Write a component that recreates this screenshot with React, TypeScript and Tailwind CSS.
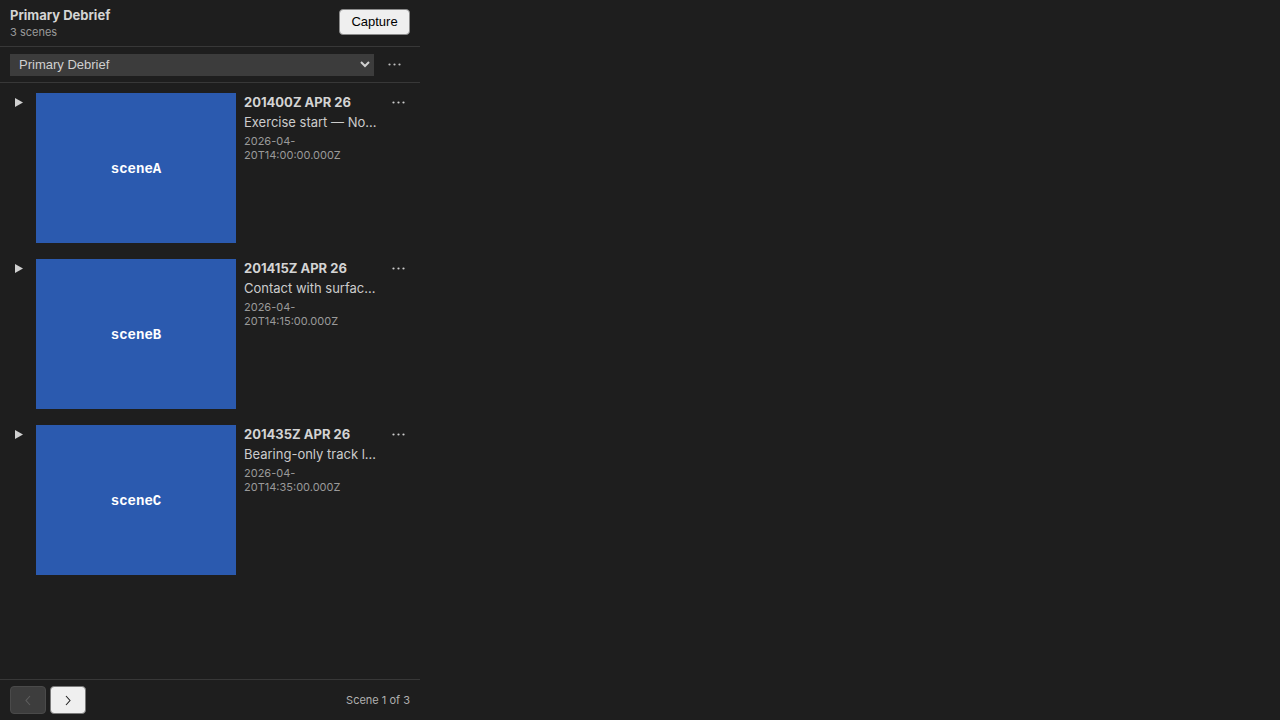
import React from "react";

type Scene = {
  id: string;
  title: string;
  description: string;
  timestamp: string;
};

const scenes: Scene[] = [
  {
    id: "sceneA",
    title: "201400Z APR 26",
    description: "Exercise start — Northern sector brief",
    timestamp: "2026-04-20T14:00:00.000Z",
  },
  {
    id: "sceneB",
    title: "201415Z APR 26",
    description: "Contact with surface group bearing 040",
    timestamp: "2026-04-20T14:15:00.000Z",
  },
  {
    id: "sceneC",
    title: "201435Z APR 26",
    description: "Bearing-only track lost after sprint",
    timestamp: "2026-04-20T14:35:00.000Z",
  },
];

const Dots: React.FC<{ className?: string }> = ({ className }) => (
  <svg width="13" height="3" viewBox="0 0 13 3" className={className} fill="currentColor">
    <circle cx="1.5" cy="1.5" r="1.1" />
    <circle cx="6.5" cy="1.5" r="1.1" />
    <circle cx="11.5" cy="1.5" r="1.1" />
  </svg>
);

const SceneRow: React.FC<{ scene: Scene }> = ({ scene }) => {
  // split timestamp so it wraps after the date dash like the reference
  const datePart = scene.timestamp.slice(0, 8);
  const rest = scene.timestamp.slice(8);
  return (
    <div className="flex items-start pl-[15px] pr-[15px] mb-[16px]">
      <button className="w-[21px] pt-[5px] flex text-[#d0d0d0]">
        <svg width="8" height="9" viewBox="0 0 8 9" fill="currentColor">
          <path d="M0 0 L8 4.5 L0 9 Z" />
        </svg>
      </button>
      <div className="w-[200px] h-[150px] bg-[#2b5aaf] flex items-center justify-center shrink-0">
        <span className="text-white font-bold text-[14px] font-[family-name:'Liberation_Mono',monospace] mt-[2px]">
          {scene.id}
        </span>
      </div>
      <div className="ml-[8px] w-[137px] min-w-0 flex flex-col">
        <div className="text-[13px] font-bold text-[#d4d4d4] leading-[18px]">
          {scene.title}
        </div>
        <div className="text-[13px] text-[#cccccc] leading-[18px] mt-[2px] truncate">
          {scene.description}
        </div>
        <div className="text-[11px] text-[#9a9a9a] leading-[14px] mt-[3px]">
          <div>{datePart}</div>
          <div>{rest}</div>
        </div>
      </div>
      <button className="ml-auto mt-[8px] text-[#cccccc]">
        <Dots />
      </button>
    </div>
  );
};

export default function App() {
  return (
    <div className="w-full h-screen bg-[#1e1e1e] font-[family-name:'Inter',sans-serif]">
      <div className="w-[420px] h-full flex flex-col">
        <div className="h-[47px] px-[10px] flex items-center justify-between border-b border-[#383838] shrink-0">
          <div className="flex flex-col">
            <span className="text-[13px] font-bold text-[#d4d4d4] leading-[16px]">Primary Debrief</span>
            <span className="text-[11px] text-[#9a9a9a] leading-[14px] mt-[2px]">3 scenes</span>
          </div>
          <button className="h-[26px] w-[71px] bg-[#efefef] border border-[#8a8a8a] rounded-[4px] text-[13px] text-black font-[family-name:'Liberation_Sans',Arial,sans-serif] -mt-[2px]">
            Capture
          </button>
        </div>
        <div className="h-[36px] px-[10px] flex items-center border-b border-[#383838] shrink-0">
          <div className="relative w-[364px] h-[22px] bg-[#3c3c3c] flex items-center">
            <span className="pl-[9px] text-[13px] text-[#d0d0d0] font-[family-name:'Liberation_Sans',Arial,sans-serif]">
              Primary Debrief
            </span>
            <svg
              className="absolute right-[4px] top-[7px] text-[#d0d0d0]"
              width="10"
              height="7"
              viewBox="0 0 10 7"
              fill="none"
              stroke="currentColor"
              strokeWidth="2"
            >
              <path d="M1 1 L5 5 L9 1" />
            </svg>
          </div>
          <button className="ml-[14px] text-[#bdbdbd]">
            <Dots />
          </button>
        </div>
        <div className="flex-1 pt-[10px] overflow-hidden">
          {scenes.map((s) => (
            <SceneRow key={s.id} scene={s} />
          ))}
        </div>
        <div className="h-[41px] px-[10px] flex items-center justify-between border-t border-[#383838] shrink-0">
          <div className="flex gap-[4px]">
            <button className="w-[36px] h-[28px] bg-[#3d3d3d] border border-[#4a4a4a] rounded-[4px] flex items-center justify-center text-[#5e5e5e]">
              <svg width="6" height="11" viewBox="0 0 6 11" fill="none" stroke="currentColor" strokeWidth="1.1">
                <path d="M5 1 L1 5.5 L5 10" />
              </svg>
            </button>
            <button className="w-[36px] h-[28px] bg-[#efefef] border border-[#7a7a7a] rounded-[4px] flex items-center justify-center text-[#222]">
              <svg width="6" height="11" viewBox="0 0 6 11" fill="none" stroke="currentColor" strokeWidth="1.1">
                <path d="M1 1 L5 5.5 L1 10" />
              </svg>
            </button>
          </div>
          <span className="text-[11px] text-[#b0b0b0]">Scene 1 of 3</span>
        </div>
      </div>
    </div>
  );
}
